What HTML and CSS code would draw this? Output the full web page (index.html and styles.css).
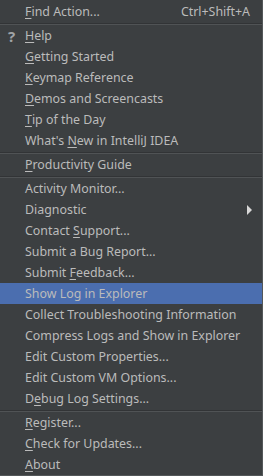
FILE: index.html
```html
<!DOCTYPE html>
<html lang="en">
<head>
    <meta charset="UTF-8">
    <title>Help Menu</title>
    <link rel="stylesheet" href="styles.css">
</head>
<body>
    <div class="menu">
        <div class="item"><span class="label"><u>F</u>ind Action...</span><span class="shortcut">Ctrl+Shift+A</span></div>
        <div class="sep"></div>
        <div class="item"><span class="icon">?</span><span class="label"><u>H</u>elp</span></div>
        <div class="item"><span class="label"><u>G</u>etting Started</span></div>
        <div class="item"><span class="label"><u>K</u>eymap Reference</span></div>
        <div class="item"><span class="label"><u>D</u>emos and Screencasts</span></div>
        <div class="item"><span class="label"><u>T</u>ip of the Day</span></div>
        <div class="item"><span class="label">What's <u>N</u>ew in IntelliJ IDEA</span></div>
        <div class="sep"></div>
        <div class="item"><span class="label"><u>P</u>roductivity Guide</span></div>
        <div class="sep"></div>
        <div class="item"><span class="label">Activity Monitor...</span></div>
        <div class="item"><span class="label">Diagnostic</span><span class="arrow"></span></div>
        <div class="item"><span class="label">Contact <u>S</u>upport...</span></div>
        <div class="item"><span class="label">Submit a Bug Report...</span></div>
        <div class="item"><span class="label">Submit <u>F</u>eedback...</span></div>
        <div class="item selected"><span class="label">Show Log in Explorer</span></div>
        <div class="item"><span class="label">Collect Troubleshooting Information</span></div>
        <div class="item"><span class="label">Compress Logs and Show in Explorer</span></div>
        <div class="item"><span class="label">Edit Custom Properties...</span></div>
        <div class="item"><span class="label">Edit Custom VM Options...</span></div>
        <div class="item"><span class="label">D<u>e</u>bug Log Settings...</span></div>
        <div class="sep"></div>
        <div class="item"><span class="label"><u>R</u>egister...</span></div>
        <div class="item"><span class="label"><u>C</u>heck for Updates...</span></div>
        <div class="item"><span class="label"><u>A</u>bout</span></div>
    </div>
</body>
</html>
```

FILE: styles.css
```css
:root {
    --menu-bg: #3c3f41;
    --text-color: #bbbbbb;
    --selected-bg: #4b6eaf;
    --border-color: #535759;
    --sep-dark: #323436;
    --sep-light: #505355;
}

* {
    margin: 0;
    padding: 0;
    box-sizing: border-box;
}

body {
    background-color: var(--menu-bg);
    font-family: "Noto Sans", sans-serif;
    font-size: 12.4px;
    color: var(--text-color);
}

.menu {
    width: 263px;
    height: 476px;
    padding-top: 1px;
    background-color: var(--menu-bg);
    border-right: 1px solid var(--border-color);
    border-bottom: 1px solid var(--border-color);
    display: flex;
    flex-direction: column;
}

.item {
    height: 21px;
    display: flex;
    align-items: center;
    padding-left: 25px;
    padding-right: 12px;
    position: relative;
    white-space: nowrap;
}

.item.selected {
    background-color: var(--selected-bg);
}

.label {
    flex: 1;
}

.label u {
    text-decoration: underline;
    text-underline-offset: 2px;
}

.icon {
    position: absolute;
    left: 8px;
    top: 1px;
    font-size: 15px;
    font-weight: bold;
    color: #a0a4a7;
}

.arrow {
    width: 0;
    height: 0;
    border-top: 5px solid transparent;
    border-bottom: 5px solid transparent;
    border-left: 5px solid #d8d8d8;
    margin-right: -2px;
}

.sep {
    height: 3px;
    display: flex;
    flex-direction: column;
    justify-content: center;
}

.sep::before {
    content: "";
    height: 1px;
    background-color: var(--sep-dark);
}

.sep::after {
    content: "";
    height: 1px;
    background-color: var(--sep-light);
}
```
